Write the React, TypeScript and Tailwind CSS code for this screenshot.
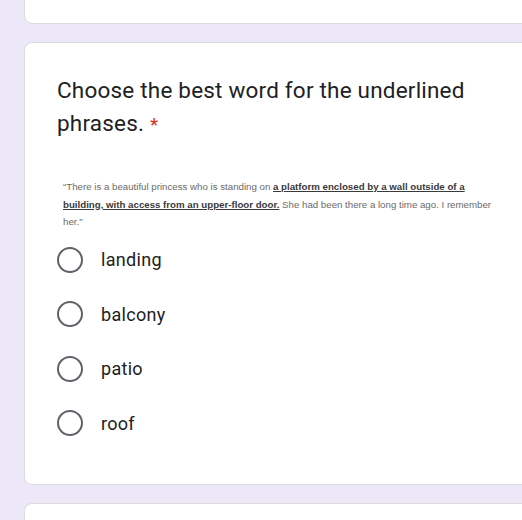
export default function App() {
  const options = ["landing", "balcony", "patio", "roof"];

  return (
    <div className="w-[522px] h-[520px] overflow-hidden bg-[#ede8f7] flex flex-col gap-[18px]" style={{ fontFamily: "Roboto, sans-serif" }}>
      {/* previous card (only bottom visible) */}
      <div className="h-[44px] mt-[-20px] ml-[24px] mr-[-20px] shrink-0 bg-white border border-[#dadce0] rounded-lg" />

      {/* question card */}
      <div className="ml-[24px] mr-[-20px] h-[443px] shrink-0 bg-white border border-[#dadce0] rounded-lg pl-[32px] pr-[40px] pt-[31px]">
        <h2 className="text-[22.5px] leading-[33px] text-[#202124] tracking-[0.2px] pr-[10px]">
          Choose the best word for the underlined phrases.{" "}
          <span className="text-[#d93025] text-[19px]">*</span>
        </h2>

        <p
          className="mt-[37px] ml-[6px] text-[9.7px] leading-[17.5px] text-[#6b6b6b]"
          style={{ fontFamily: "'Liberation Sans', sans-serif" }}
        >
          “There is a beautiful princess who is standing on{" "}
          <span className="underline font-bold text-[#3a3a3a]">
            a platform enclosed by a wall outside of a building, with access from an upper-floor door.
          </span>{" "}
          She had been there a long time ago. I remember her.”
        </p>

        <div className="mt-[16px] flex flex-col gap-[28.5px]">
          {options.map((o) => (
            <label key={o} className="flex items-center gap-[18px] h-[26px]">
              <span className="w-[26px] h-[26px] rounded-full border-[2.5px] border-[#5f6368] shrink-0" />
              <span className="text-[18px] text-[#202124] tracking-[0.3px]">{o}</span>
            </label>
          ))}
        </div>
      </div>

      {/* next card (top visible) */}
      <div className="ml-[24px] mr-[-20px] h-[60px] shrink-0 bg-white border border-[#dadce0] rounded-lg" />
    </div>
  );
}
